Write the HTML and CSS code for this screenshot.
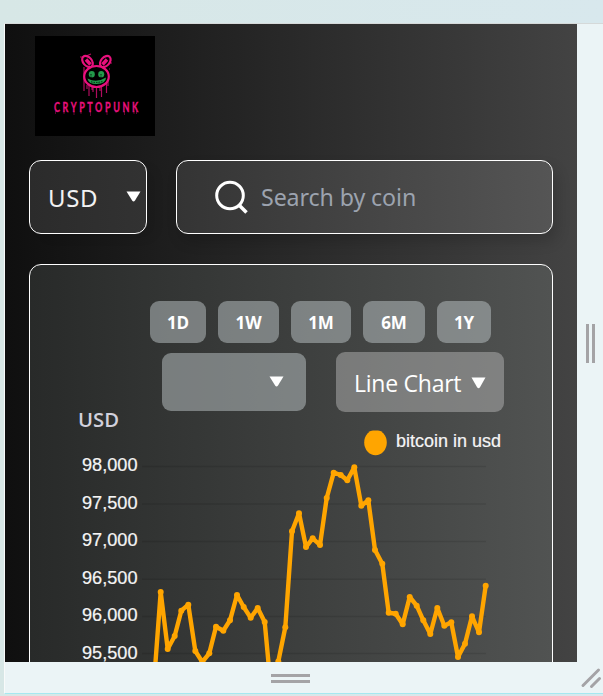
FILE: index.html
```html
<!DOCTYPE html>
<html lang="en">
<head>
<meta charset="utf-8">
<title>Cryptopunk</title>
<link rel="stylesheet" href="styles.css">
</head>
<body>
<div class="stage">
  <main class="app">
    <header class="logo">
      <svg width="120" height="100" viewBox="0 0 120 100" role="img" aria-label="Cryptopunk">
        <g fill="none" stroke="#e9107d">
          <g stroke-width="2.200">
            <ellipse cx="52.500" cy="25.500" rx="4.300" ry="6.400" transform="rotate(-42 52.500 25.500)"/>
            <ellipse cx="70.300" cy="25.500" rx="4.300" ry="6.400" transform="rotate(42 70.300 25.500)"/>
            <ellipse cx="61.500" cy="40.500" rx="12.300" ry="10.500"/>
          </g>
          <path stroke-width="3.400" d="M51 23.500l4.500 5M72 23.500l-4.500 5"/>
          <path stroke-width="1.200" opacity=".75" d="M49 31v24M54 49v11M52 49v4M58 51v5M61.500 51v11M66.500 50v11M65 50v5M71.500 47v10M73 45v5M57 51v3M48 21h-3M51 20l5-2M75 27h2M74 33h1"/>
        </g>
        <g fill="#239b4b">
          <ellipse cx="56.800" cy="38.300" rx="3" ry="3.300"/>
          <ellipse cx="66.200" cy="38.300" rx="3" ry="3.300"/>
          <path d="M52.500 42.500q9 5 18.500-1 0 6-9.500 6.500-8 0-9-5.500z"/>
        </g>
        <path d="M56 38v4M66 38v4M56 45.800q6 1.500 12-.5" stroke="#000" stroke-width=".8" stroke-dasharray="1.500 1" fill="none"/>
        <text class="logo-word" transform="translate(19 76) scale(.72 1)" x="0" y="0" textLength="117" lengthAdjust="spacing">CRYPTOPUNK</text>
        <path d="M20.500 75v3M29 75v3M39 75v4M46 75v3M55.500 75v5M72 75v4M81 75v2M89.500 75v4M99 75v3M101.500 75v3" stroke="#e9107d" stroke-width=".7" opacity=".6"/>
      </svg>
    </header>

    <div class="toolbar">
      <div class="currency"><span class="currency-text">USD</span>
        <svg class="arrow" width="15" height="11" viewBox="0 0 15 11"><path d="M.5.500h14L9 9.600q-1.400 1.800-2.900 0z"/></svg>
      </div>
      <div class="search">
        <svg width="34" height="35" viewBox="0 0 34 35" fill="none" stroke="#fff"><circle cx="15" cy="15.500" r="13.300" stroke-width="3"/><path d="M24 25l7.500 7.500" stroke-width="3.500"/></svg>
        <span class="search-text">Search by coin</span>
      </div>
    </div>

    <section class="panel">
      <div class="ranges">
        <button class="d">1D</button><button class="w">1W</button><button class="m">1M</button><button class="m6">6M</button><button class="y">1Y</button>
      </div>
      <div class="selects">
        <div class="coin-select"><svg class="arrow" width="15" height="11" viewBox="0 0 15 11"><path d="M.5.500h14L9 9.600q-1.400 1.800-2.900 0z"/></svg></div>
        <div class="type-select"><span class="type-text">Line Chart</span><svg class="arrow" width="15" height="12" viewBox="0 0 15 12"><path d="M.5.500h14L9 10.300q-1.400 1.800-2.900 0z"/></svg></div>
      </div>
      <svg class="chart" width="522" height="260" viewBox="30 402 522 260">
        <defs><marker id="dot" markerUnits="userSpaceOnUse" markerWidth="8" markerHeight="8" refX="4" refY="4"><circle cx="4" cy="4" r="3" fill="#ffa500"/></marker></defs>
        <text class="unit" x="78" y="427" textLength="41" lengthAdjust="spacingAndGlyphs">USD</text>
        <svg x="364" y="430.500" width="23" height="26" viewBox="364 430.500 23 26"><ellipse cx="375.500" cy="442.500" rx="11.300" ry="12.800" fill="#ffa500"/></svg>
        <g class="labels">
          <text x="396" y="447" textLength="105" lengthAdjust="spacingAndGlyphs">bitcoin in usd</text>
          <text x="82" y="471" textLength="55.500" lengthAdjust="spacingAndGlyphs">98,000</text>
          <text x="82" y="508.500" textLength="55.500" lengthAdjust="spacingAndGlyphs">97,500</text>
          <text x="82" y="546" textLength="55.500" lengthAdjust="spacingAndGlyphs">97,000</text>
          <text x="82" y="583.500" textLength="55.500" lengthAdjust="spacingAndGlyphs">96,500</text>
          <text x="82" y="621" textLength="55.500" lengthAdjust="spacingAndGlyphs">96,000</text>
          <text x="82" y="658.500" textLength="55.500" lengthAdjust="spacingAndGlyphs">95,500</text>
        </g>
        <path class="grid" d="M142 466.500H486M142 504H486M142 541.500H486M142 579.200H486M142 616.500H486M142 653.500H486"/>
        <polyline class="line" points="153.800,685 160.700,592 167.700,649 174.700,636 181.300,610.700 188.300,604.700 195.300,651 202.300,662 209.300,653.300 216,626.700 223.300,630.700 230,620.300 237,595 243.700,607 250.700,617.700 257.700,608 264.700,622 271.500,695 278.300,661.500 285.300,627.300 292,531.300 299,513.300 306,547 312.700,538.300 320,545 326.700,498 333.700,472.700 340.700,475 347.300,480.300 354.300,467.300 361.300,505.700 368.300,500.300 375,550 382.300,563.700 388.700,612.700 395.700,613.700 402.700,624.300 409.700,597 416.700,605.700 423.300,620.300 430.300,634 437.300,608 444.300,625.700 451.300,622.300 458,657 465,643.700 472,616.300 479,632.300 485.700,585.700"/>
      </svg>
    </section>
  </main>
  <div class="side-grip"></div>
  <div class="bottom-grip"></div>
  <svg class="corner" width="24" height="24" viewBox="0 0 24 24"><path d="M4 20.500L19.500 5M12.500 21.500l8-8"/></svg>
</div>
</body>
</html>
```

FILE: styles.css
```css
* { box-sizing: border-box; }
body {
  margin: 0;
  height: 696px;
  overflow: hidden;
  padding: 23px 0 0 4px;
  background: linear-gradient(90deg, #d7e7e6, #d8e8ed);
  font-family: "Open Sans", sans-serif;
}
.stage {
  display: grid;
  grid-template: 638px 30px / 572px 26px;
  width: 599px;
  height: 671px;
  border: 1px solid #d5d9d9;
  border-width: 1px 0 1px 1px;
  border-bottom-color: #a5e8f0;
  border-left-color: #f8fafa;
  background: #ebf4f6;
}
.app {
  overflow: hidden;
  padding: 12px 24px 0;
  background: linear-gradient(90deg, #0f0f0f, #434343);
  color: #fff;
}
.logo {
  width: 120px;
  height: 100px;
  margin-left: 6px;
  background: #000;
}
.logo svg, .chart { display: block; }
.logo-word {
  font: 700 12.5px Lato, sans-serif;
  fill: #e9107d;
  stroke: #e9107d;
  stroke-width: .3;
}
.toolbar { display: flex; gap: 29px; margin-top: 24px; }
.currency, .search {
  display: flex;
  align-items: center;
  height: 74px;
  border: 1px solid #fff;
  border-radius: 12px;
  font-family: "Noto Sans", sans-serif;
  font-size: 24px;
}
.currency {
  width: 118px;
  padding-left: 18px;
  background: linear-gradient(90deg, #2b2b2b, #323232);
  box-shadow: 10px 6px 12px -4px rgba(0, 0, 0, .1);
}
.currency-text { width: 78px; font-size: 24px; letter-spacing: .6px; color: #f2f2f2; }
.arrow { flex: none; fill: #fff; }
.currency .arrow { margin-bottom: 2px; }
.search {
  width: 377px;
  padding-left: 38px;
  background: linear-gradient(90deg, #343434, #555);
  box-shadow: 4px 8px 14px rgba(0, 0, 0, .16);
}
.search svg { flex: none; margin-right: 12px; }
.search-text { color: #9ca3af; font-size: 23.2px; letter-spacing: -.1px; white-space: nowrap; }
.panel {
  width: 524px;
  height: 520px;
  margin-top: 30px;
  padding-top: 36px;
  border: 1px solid #fff;
  border-radius: 12px;
  background: linear-gradient(90deg, #282a29, #515352);
}
.ranges { display: flex; gap: 12px; margin-left: 120px; }
button {
  height: 42px;
  padding: 0;
  border: 0;
  border-radius: 9px;
  background: rgba(184, 190, 192, .53);
  color: #fff;
  font: 700 17px "Open Sans", sans-serif;
  letter-spacing: -.2px;
}
.d { width: 56px; }
.w { width: 61px; }
.m { width: 60px; }
.m6 { width: 62px; }
.y { width: 54px; }
.selects {
  display: flex;
  align-items: center;
  gap: 30px;
  height: 60px;
  margin: 9px 0 -10px 132px;
}
.coin-select, .type-select {
  display: flex;
  align-items: center;
  border-radius: 9px;
}
.coin-select {
  width: 144px;
  height: 58px;
  padding-left: 107px;
  background: rgba(184, 190, 192, .53);
}
.coin-select .arrow { margin-top: -1px; }
.type-select {
  width: 168px;
  height: 60px;
  padding-left: 18px;
  background: rgba(190, 190, 190, .46);
  font-size: 23px;
  letter-spacing: -.25px;
}
.type-text { width: 117px; padding-top: 2px; white-space: nowrap; }
.type-select .arrow { margin-top: 1px; }
.unit { font: 600 20px "Open Sans", sans-serif; fill: #d1d0dc; }
.labels { font: 18px "Liberation Sans", sans-serif; fill: #f5f5f5; stroke: #f5f5f5; stroke-width: .2; }
.grid { stroke: rgba(0, 0, 0, .1); stroke-width: 1.4; fill: none; }
.line {
  fill: none;
  stroke: #ffa500;
  stroke-width: 4.4;
  stroke-linejoin: round;
  stroke-linecap: round;
  marker: url(#dot);
}
.side-grip, .bottom-grip { border: 3px solid #a4a3a6; }
.side-grip {
  width: 9px;
  height: 39px;
  margin: 300px 0 0 9px;
  border-width: 0 3px;
}
.bottom-grip {
  width: 39px;
  height: 9px;
  margin: 12px 0 0 266px;
  border-width: 3px 0;
}
.corner { margin: 3px 0 0 2px; fill: none; stroke: #a4a3a6; stroke-width: 3; stroke-linecap: round; }
```
